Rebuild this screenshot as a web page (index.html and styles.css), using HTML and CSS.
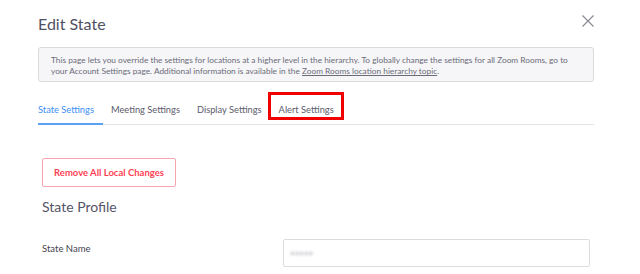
FILE: index.html
```html
<!DOCTYPE html>
<html lang="en">
<head>
    <meta charset="UTF-8">
    <meta name="viewport" content="width=device-width, initial-scale=1.0">
    <title>Edit State</title>
    <link rel="stylesheet" href="styles.css">
</head>
<body>

    <div class="modal">
        <div class="modal-header">
            <h1>Edit State</h1>
            <button class="close" aria-label="Close">
                <svg width="12" height="12" viewBox="0 0 12 12">
                    <path d="M0.5 0.5 L11.5 11.5 M11.5 0.5 L0.5 11.5" stroke="#8b8b98" stroke-width="1.2" fill="none"/>
                </svg>
            </button>
        </div>

        <div class="notice">
            <p>This page lets you override the settings for locations at a higher level in the hierarchy. To globally change the settings for all Zoom Rooms, go to</p>
            <p>your Account Settings page. Additional information is available in the <a href="#">Zoom Rooms location hierarchy topic</a>.</p>
        </div>

        <nav class="tabs">
            <ul>
                <li class="active"><a href="#">State Settings</a></li>
                <li><a href="#">Meeting Settings</a></li>
                <li><a href="#">Display Settings</a></li>
                <li class="marked"><a href="#">Alert Settings</a></li>
            </ul>
        </nav>

        <section class="content">
            <button class="remove">Remove All Local Changes</button>
            <h2>State Profile</h2>
            <div class="field">
                <label for="state-name">State Name</label>
                <div class="input"><span class="blur">•••••</span></div>
            </div>
        </section>
    </div>

</body>
</html>
```

FILE: styles.css
```css
/* Basic Styling */
body {
    font-family: Lato, "Open Sans", Arial, sans-serif;
    margin: 0;
    padding: 0;
    background-color: #fff;
    color: #4a4a5c;
}

.modal {
    padding: 13px 46px 0 38px;
}

.modal-header {
    display: flex;
    justify-content: space-between;
    align-items: flex-start;
    height: 34px;
}

.modal-header h1 {
    margin: 0;
    font-size: 16px;
    font-weight: 400;
    line-height: 22px;
    color: #4f4f63;
}

.close {
    background: none;
    border: none;
    padding: 0;
    margin-top: 2px;
    cursor: pointer;
}

.notice {
    background: #f6f6f8;
    border: 1px solid #d9d9de;
    border-radius: 3px;
    padding: 7px 12px 5px 12px;
    font-size: 8.3px;
    line-height: 11px;
    color: #6b6b78;
    height: 21px;
}

.notice p {
    margin: 0;
    white-space: nowrap;
}

.notice a {
    color: #6b6b78;
}

.tabs {
    margin-top: 11px;
    border-bottom: 1px solid #e4e4e8;
}

.tabs ul {
    list-style: none;
    margin: 0;
    padding: 0;
    display: flex;
    align-items: flex-start;
}

.tabs li {
    margin-right: 17px;
    padding: 7px 0 7px 0;
    line-height: 13px;
}

.tabs li a {
    color: #5b5b6b;
    text-decoration: none;
    font-size: 9.3px;
}

.tabs li.active {
    border-bottom: 2px solid #5aa2f8;
    margin-bottom: -1px;
    padding-right: 9px;
    margin-right: 8px;
}

.tabs li.active a {
    color: #3d8ff5;
}

.tabs li.marked {
    margin: -1px 0 0 -11px;
    padding: 5px 7px 1px 8px;
    border: 3px solid #f00000;
}

.content {
    padding: 33px 0 0 4px;
}

.remove {
    background: #fff;
    border: 1px solid #f7a5ae;
    border-radius: 2px;
    color: #ff3f55;
    font-family: inherit;
    font-size: 9.5px;
    font-weight: 700;
    width: 134px;
    height: 29px;
    padding: 0;
    cursor: pointer;
}

.content h2 {
    margin: 8px 0 0 0;
    font-size: 14px;
    font-weight: 400;
    line-height: 24px;
    color: #545468;
}

.field {
    display: flex;
    align-items: flex-start;
    margin-top: 20px;
}

.field label {
    width: 241px;
    font-size: 9.5px;
    padding-top: 4px;
    color: #3f3f4f;
}

.input {
    width: 307px;
    height: 28px;
    border: 1px solid #dcdce0;
    border-radius: 2px;
    display: flex;
    align-items: center;
    padding-left: 6px;
    box-sizing: border-box;
}

.blur {
    color: #b5b5bc;
    font-size: 8px;
    filter: blur(1.5px);
}
```
